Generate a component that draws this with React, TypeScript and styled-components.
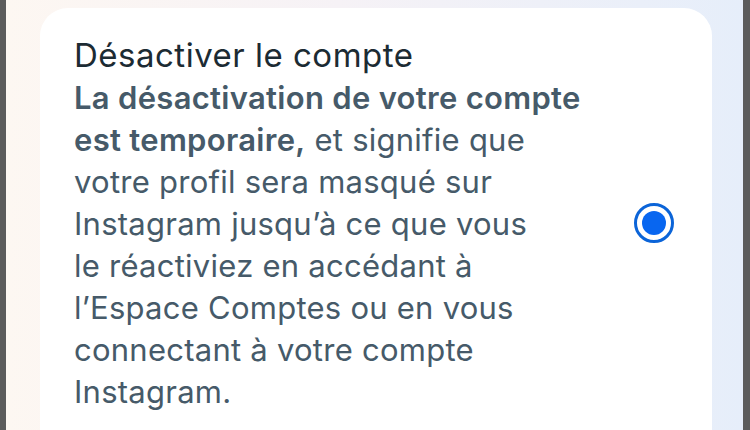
import { createGlobalStyle, styled } from 'styled-components'

const Global = createGlobalStyle`
html, body {
    margin: 0;
    padding: 0;
    height: 100%;
    overflow: hidden;
}
#root {
    height: 100%;
}
`

const Page = styled.div`
width: 750px;
height: 430px;
display: flex;
font-family: Inter, "Noto Sans", sans-serif;
`

const Edge = styled.div<{ $w: number }>`
width: ${(p) => p.$w}px;
flex-shrink: 0;
background-color: #5c5c5c;
`

const Backdrop = styled.div`
flex: 1;
display: flex;
padding: 8px 31px 0 34px;
background: linear-gradient(90deg, #fdf7f2 0%, #f6f2f6 45%, #e6eefa 100%);
`

const Card = styled.div`
flex: 1;
display: flex;
align-items: center;
justify-content: space-between;
background-color: #ffffff;
border-radius: 28px 28px 0 0;
padding: 25px 38px 17px 34px;
`

const TextBlock = styled.div`
display: flex;
flex-direction: column;
`

const Title = styled.div`
font-size: 33px;
line-height: 44px;
font-weight: 400;
letter-spacing: 0.5px;
color: #1c2b33;
`

const Body = styled.p`
margin: 0;
font-size: 31px;
line-height: 42px;
font-weight: 400;
letter-spacing: 0.25px;
color: #465a69;
b {
    font-weight: 600;
    letter-spacing: 0.3px;
}
`

const Radio = styled.div`
width: 34px;
height: 34px;
border-radius: 50%;
border: 3.5px solid #0b64d8;
display: flex;
align-items: center;
justify-content: center;
flex-shrink: 0;
&::after {
    content: '';
    width: 24px;
    height: 24px;
    border-radius: 50%;
    background-color: #0866f0;
}
`

const App = () => {
    return (
        <Page>
            <Global />
            <Edge $w={6} />
            <Backdrop>
                <Card>
                    <TextBlock>
                        <Title>Désactiver le compte</Title>
                        <Body>
                            <b>La désactivation de votre compte<br />est temporaire,</b> et signifie que<br />
                            votre profil sera masqué sur<br />
                            Instagram jusqu’à ce que vous<br />
                            le réactiviez en accédant à<br />
                            l’Espace Comptes ou en vous<br />
                            connectant à votre compte<br />
                            Instagram.
                        </Body>
                    </TextBlock>
                    <Radio />
                </Card>
            </Backdrop>
            <Edge $w={7} />
        </Page>
    )
}

export default App
